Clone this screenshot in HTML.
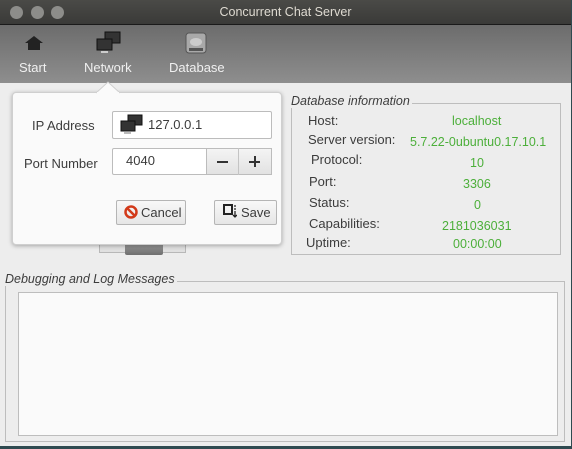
<!DOCTYPE html>
<html><head><style>
*{margin:0;padding:0;box-sizing:border-box}
body{width:572px;height:449px;background:#2f4a50;font-family:"Liberation Sans",sans-serif;font-size:13px;color:#3c3c3c;position:relative;overflow:hidden}
.win{position:absolute;left:0;top:0;width:571px;height:446px;background:#ededed}
.title{position:absolute;left:0;top:0;width:571px;height:25px;background:linear-gradient(#4a4a47,#3a3a38);border-bottom:1px solid #1a1a1a;color:#dfdbd2;text-align:center;line-height:25px;font-size:12.5px}
.dot{position:absolute;top:6px;width:13px;height:13px;border-radius:50%;background:#8d8d8a}
.tb{position:absolute;left:0;top:25px;width:571px;height:58px;background:linear-gradient(#6c6c6c,#8e8e8e)}
.tl{position:absolute;top:35px;color:#f0f0f0;font-size:13px}
.abs{position:absolute}
.lbl{position:absolute;font-size:13px;color:#3c3c3c}
.g{position:absolute;color:#4caf3a;font-size:12.5px}
.btn{position:absolute;border:1px solid #b5b5b5;border-radius:2px;background:linear-gradient(#f8f8f8,#e6e6e6);font-size:13px;color:#3c3c3c}
</style></head><body>
<div class="win">
<div class="title">Concurrent Chat Server</div>
<div class="dot" style="left:10px"></div><div class="dot" style="left:31px"></div><div class="dot" style="left:51px"></div>
<div class="tb">
 <svg class="abs" style="left:24px;top:10px" width="20" height="16"><path d="M10 1L1 8h3v7h12V8h3z" fill="#222"/></svg>
 <svg class="abs" style="left:96px;top:6px" width="26" height="24"><rect x="9" y="1" width="15" height="11" fill="#333" stroke="#111"/><rect x="1" y="8" width="15" height="11" fill="#333" stroke="#111"/><rect x="5" y="20" width="7" height="2" fill="#ccc"/></svg>
 <svg class="abs" style="left:185px;top:7px" width="22" height="22"><rect x="1" y="1" width="20" height="20" rx="3" fill="#a9a9a9" stroke="#555"/><ellipse cx="11" cy="10" rx="6" ry="4" fill="#ccc"/><rect x="4" y="16" width="14" height="3" fill="#555"/></svg>
 <div class="tl" style="left:19px">Start</div>
 <div class="tl" style="left:84px">Network</div>
 <div class="tl" style="left:169px">Database</div>
</div>
<div class="abs" style="left:99px;top:243px;width:87px;height:10px;border:1px solid #b8b8b8;background:#e0e0e0"></div>
<div class="abs" style="left:125px;top:243px;width:38px;height:12px;background:linear-gradient(#9a9a9a,#6f6f6f);border-radius:2px"></div>
<div class="abs" style="left:291px;top:103px;width:270px;height:152px;border:1px solid #bdbdbd"></div>
<div class="abs" style="left:291px;top:94px;background:#ededed;font-style:italic;font-size:12.5px;padding-right:2px">Database information</div>
<div class="lbl" style="left:308px;top:113px">Host:</div><div class="g" style="left:452px;top:114px">localhost</div>
<div class="lbl" style="left:308px;top:132px">Server version:</div><div class="g" style="left:410px;top:135px">5.7.22-0ubuntu0.17.10.1</div>
<div class="lbl" style="left:311px;top:152px">Protocol:</div><div class="g" style="left:470px;top:156px">10</div>
<div class="lbl" style="left:309px;top:174px">Port:</div><div class="g" style="left:463px;top:177px">3306</div>
<div class="lbl" style="left:309px;top:195px">Status:</div><div class="g" style="left:474px;top:198px">0</div>
<div class="lbl" style="left:309px;top:216px">Capabilities:</div><div class="g" style="left:442px;top:219px">2181036031</div>
<div class="lbl" style="left:306px;top:235px">Uptime:</div><div class="g" style="left:453px;top:237px">00:00:00</div>
<div class="abs" style="left:5px;top:281px;width:560px;height:161px;border:1px solid #bdbdbd"></div>
<div class="abs" style="left:5px;top:272px;background:#ededed;font-style:italic;font-size:12.5px;padding-right:2px">Debugging and Log Messages</div>
<div class="abs" style="left:18px;top:292px;width:540px;height:144px;border:1px solid #bdbdbd;background:#fafafa"></div>
<div class="abs" style="left:12px;top:92px;width:270px;height:153px;background:#fafafa;border:1px solid #cfcfcf;border-radius:4px;box-shadow:0 1px 4px rgba(0,0,0,.3)"></div>
<svg class="abs" style="left:96px;top:81px" width="24" height="13"><path d="M0 12L12 1L24 12" fill="#fafafa" stroke="#cfcfcf"/><rect x="1" y="11" width="22" height="2" fill="#fafafa"/></svg>
<div class="lbl" style="left:32px;top:118px">IP Address</div>
<div class="abs" style="left:112px;top:111px;width:160px;height:28px;border:1px solid #bcbcbc;border-radius:2px;background:#fff"></div>
<svg class="abs" style="left:120px;top:114px" width="24" height="22"><rect x="8" y="1" width="14" height="10" fill="#333" stroke="#111"/><rect x="1" y="7" width="14" height="10" fill="#333" stroke="#111"/><rect x="4" y="18" width="7" height="2" fill="#bbb"/></svg>
<div class="lbl" style="left:148px;top:117px">127.0.0.1</div>
<div class="lbl" style="left:24px;top:156px">Port Number</div>
<div class="abs" style="left:112px;top:148px;width:160px;height:27px;border:1px solid #bcbcbc;border-radius:2px;background:#fff"></div>
<div class="lbl" style="left:126px;top:153px">4040</div>
<div class="abs" style="left:206px;top:148px;width:66px;height:27px;border:1px solid #bcbcbc;background:linear-gradient(#f4f4f4,#e2e2e2)"></div>
<div class="abs" style="left:238px;top:148px;width:1px;height:27px;background:#c4c4c4"></div>
<div class="abs" style="left:217px;top:161px;width:11px;height:2px;background:#333"></div>
<div class="abs" style="left:249px;top:161px;width:11px;height:2px;background:#333"></div>
<div class="abs" style="left:254px;top:156px;width:2px;height:11px;background:#333"></div>
<div class="btn" style="left:116px;top:200px;width:70px;height:25px"></div>
<svg class="abs" style="left:124px;top:205px" width="14" height="14"><circle cx="7" cy="7" r="5.5" fill="none" stroke="#d23a1a" stroke-width="2.5"/><path d="M3 3L11 11" stroke="#d23a1a" stroke-width="2.5"/></svg>
<div class="lbl" style="left:141px;top:205px">Cancel</div>
<div class="btn" style="left:214px;top:200px;width:63px;height:25px"></div>
<svg class="abs" style="left:223px;top:204px" width="14" height="14"><rect x="1" y="1" width="8" height="9" fill="none" stroke="#222" stroke-width="2"/><path d="M11 2h2M11 5h2M11 8h2M12 9v4M10 11l2 2 2-2" stroke="#222" stroke-width="1.3" fill="none"/></svg>
<div class="lbl" style="left:241px;top:205px">Save</div>
</div>
</body></html>
